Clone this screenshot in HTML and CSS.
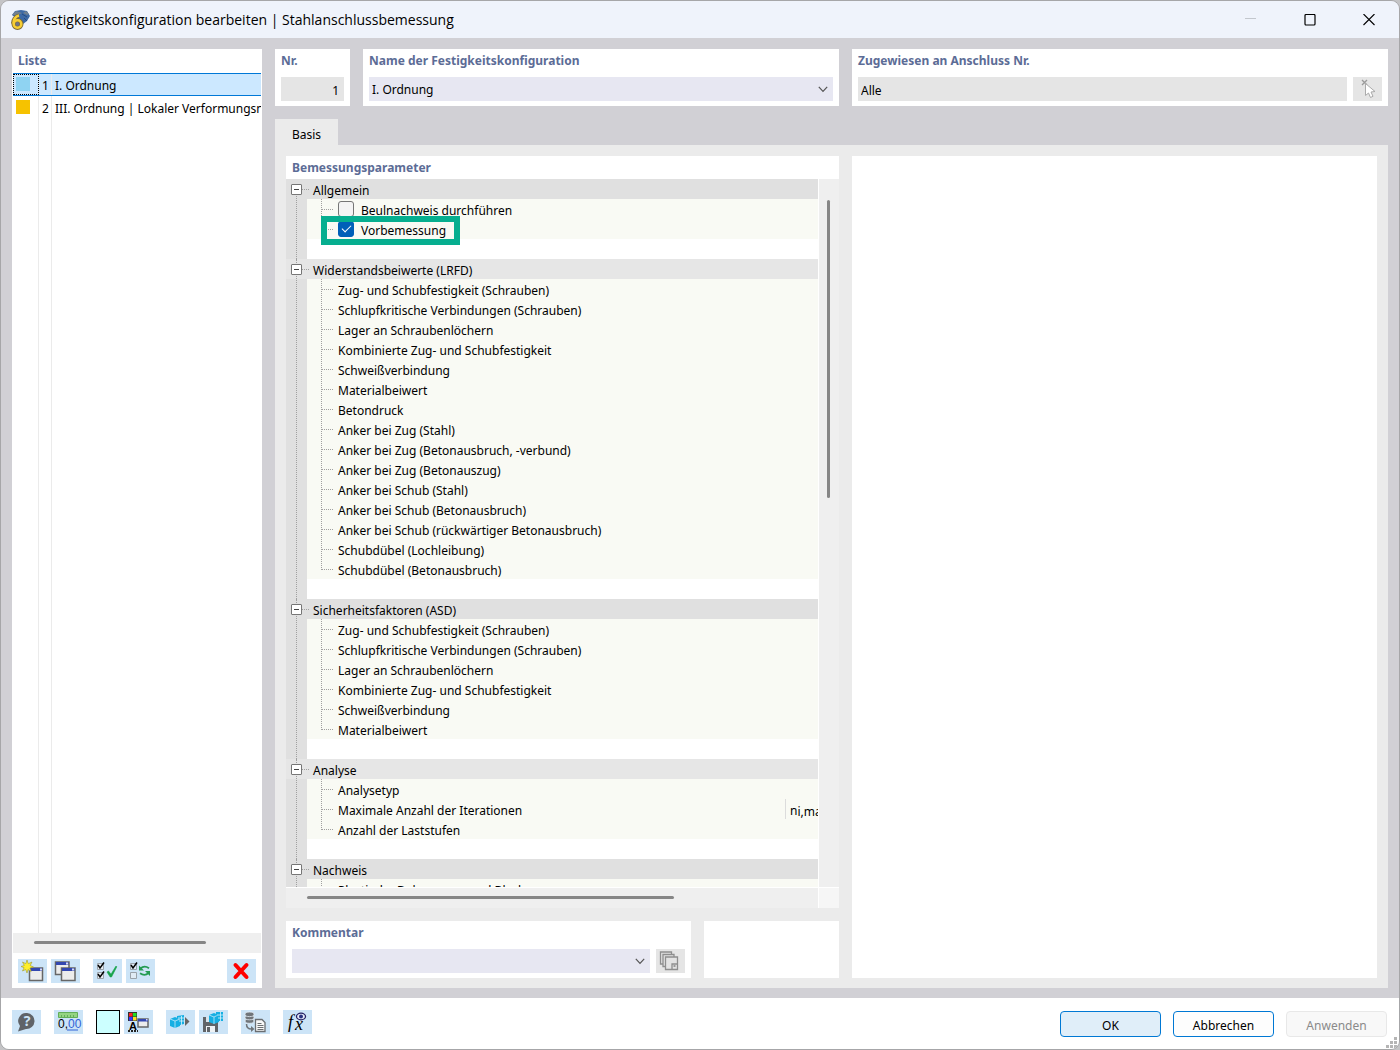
FILE: index.html
```html
<!DOCTYPE html>
<html lang="de">
<head>
<meta charset="utf-8">
<title>Festigkeitskonfiguration bearbeiten</title>
<link rel="stylesheet" href="styles.css">
</head>
<body>
<div class="window">
  <header class="titlebar">
    <svg class="logo" width="20" height="20" viewBox="0 0 20 20">
      <path d="M2 5 5 1 11 0 17 1 20 6 17 11 13 14 6 8Z" fill="#3d69a5"/>
      <path d="M2 5 6 1 12 3 8 5ZM13 3l4 2 2-1-3-3Z" fill="#71808f"/>
      <path d="M12 4l5 3M14 8l3 3" stroke="#254b83" fill="none"/>
      <path d="M9 5.500C5 6.500 3 10 3 13.500" fill="none" stroke="#7d6a35" stroke-width="4"/>
      <circle cx="7.500" cy="14" r="4" fill="#6e7488" stroke="#7d6a35" stroke-width="4"/>
      <path d="M9 5.500C5 6.500 3.500 10 3.500 13.500" fill="none" stroke="#f7cf35" stroke-width="2.600"/>
      <circle cx="7.500" cy="14" r="3.800" fill="none" stroke="#f7cf35" stroke-width="2.600"/>
    </svg>
    <h1 class="title">Festigkeitskonfiguration bearbeiten | Stahlanschlussbemessung</h1>
    <div class="caption-buttons">
      <button class="caption" aria-label="Minimieren" disabled><svg width="12" height="12"><path d="M0 4.500h11" stroke="#c3c7cd"/></svg></button>
      <button class="caption" aria-label="Maximieren"><svg width="12" height="12"><rect x="1" y=".5" width="10" height="10.500" rx="1" fill="none" stroke="#000" stroke-width="1.200"/></svg></button>
      <button class="caption" aria-label="Schließen"><svg width="12" height="12"><path d="M.5 0l11 11M11.500 0l-11 11" stroke="#000" stroke-width="1.100"/></svg></button>
    </div>
  </header>

  <main class="main">
    <aside class="list-panel">
      <h2 class="heading">Liste</h2>
      <div class="list-view">
        <table class="list">
          <tbody>
            <tr class="selected"><td class="c-color"><span class="swatch sky"></span></td><td class="c-no">1</td><td class="c-name">I. Ordnung</td></tr>
            <tr><td class="c-color"><span class="swatch amber"></span></td><td class="c-no">2</td><td class="c-name">III. Ordnung | Lokaler Verformungsnachweis</td></tr>
            <tr class="filler"><td></td><td></td><td></td></tr>
          </tbody>
        </table>
        <div class="hscroll"><span class="thumb list-thumb"></span></div>
      </div>
      <div class="toolbar list-tools">
        <button class="tool" aria-label="Neu"><svg width="29" height="24"><rect x="11.500" y="9" width="13" height="12.500" fill="#ececec" stroke="#666" stroke-width="1.500"/><path d="M12 9h12v3H12z" fill="#3347b0"/><path d="M22 9.500h2v2h-2z" fill="#d8dcf5"/><path d="M9 1l1.300 3.700L14 3l-1.800 3.500L15.500 8l-3.600 1 1.300 3.500L10 10.500 9 14l-1.300-3.500L4.500 12l1.600-3.300L3 7.500l3.300-1L4.500 3l3.300 1.700Z" fill="#ffef2a" stroke="#9f9a2d" stroke-width=".6"/></svg></button>
        <button class="tool" aria-label="Kopieren"><svg width="29" height="24"><rect x="4.500" y="3" width="13.500" height="12.500" fill="#ececec" stroke="#666" stroke-width="1.500"/><path d="M5 3h12.500v3H5z" fill="#3347b0"/><path d="M15 3.500h2v2h-2z" fill="#d8dcf5"/><rect x="10.500" y="9" width="13.500" height="12.500" fill="#ececec" stroke="#666" stroke-width="1.500"/><path d="M11 9h12.500v3H11z" fill="#3347b0"/><path d="M21 9.500h2v2h-2z" fill="#d8dcf5"/></svg></button>
        <button class="tool gap-before" aria-label="Alle auswählen"><svg width="29" height="24"><path d="M4.500 4.500h6v6h-6zM4.500 13.500h6v6h-6z" fill="#e8eef4" stroke="#9aa2aa"/><path d="M5 6l2 3 4-5.500M5 15l2 3 4-5.500" fill="none" stroke="#000" stroke-width="1.500"/><path d="M14 13l1.500-1 2.500 3.200L23 7l.8.8L18.500 18h-1.300Z" fill="#16a34a" stroke="#16a34a" stroke-width=".6"/></svg></button>
        <button class="tool" aria-label="Auswahl umkehren"><svg width="29" height="24"><path d="M4.500 4.500h6v6h-6zM4.500 13.500h6v6h-6z" fill="#e0ebf5" stroke="#9aa2aa"/><path d="M5 6l2 3 4-5.500" fill="none" stroke="#000" stroke-width="1.500"/><path d="M14.500 9.500c2.500-2.300 5.500-2.300 8.500-.3M22.500 14c-2.500 2.300-5.500 2.300-8.500.3" fill="none" stroke="#249b52" stroke-width="1.800"/><path d="M13 6.500v5h5ZM24 17v-5h-5Z" fill="#249b52"/></svg></button>
        <button class="tool push" aria-label="Löschen"><svg width="29" height="24"><path d="M8.500 6l11 12M19.500 6l-11 12" stroke="#f00" stroke-width="4" stroke-linecap="round"/></svg></button>
      </div>
    </aside>

    <section class="content">
      <div class="fields">
        <div class="field">
          <label class="heading" for="no">Nr.</label>
          <input class="input readonly number" id="no" value="1" readonly>
        </div>
        <div class="field">
          <label class="heading" for="name">Name der Festigkeitskonfiguration</label>
          <div class="combo">
            <select class="input" id="name"><option>I. Ordnung</option></select>
            <svg class="chevron" width="10" height="7"><path d="M.8.8 5 5.300 9.200.8" fill="none" stroke="#555" stroke-width="1.200"/></svg>
          </div>
        </div>
        <div class="field">
          <label class="heading" for="assigned">Zugewiesen an Anschluss Nr.</label>
          <div class="field-row">
            <input class="input readonly" id="assigned" value="Alle" readonly>
            <button class="tool disabled" aria-label="In Grafik auswählen" disabled><svg width="29" height="24"><path d="M9 3l5 5M14 3l-5 5" stroke="#9a9a9a" stroke-width="1.300"/><path d="M12.500 6.500v12l3-2.500 2 4.500 2.500-1.200-2-4.300 4-.5Z" fill="#fff" stroke="#aaa"/></svg></button>
          </div>
        </div>
      </div>

      <nav class="tabs"><button class="tab">Basis</button></nav>

      <div class="page">
        <div class="left">
          <section class="params">
            <h2 class="heading">Bemessungsparameter</h2>
            <div class="tree-frame">
              <div class="tree">
                <section class="group">
                  <h3 class="group-head"><button class="toggle" aria-label="Zuklappen"></button>Allgemein</h3>
                  <div class="group-body"><ul class="items">
                    <li class="item"><input class="check" type="checkbox" id="buckling"><label for="buckling">Beulnachweis durchführen</label></li>
                    <li class="item"><input class="check" type="checkbox" id="prelim" checked><label for="prelim">Vorbemessung</label><span class="marker"></span></li>
                  </ul></div>
                </section>
                <section class="group">
                  <h3 class="group-head"><button class="toggle" aria-label="Zuklappen"></button>Widerstandsbeiwerte (LRFD)</h3>
                  <div class="group-body"><ul class="items">
                    <li class="item">Zug- und Schubfestigkeit (Schrauben)</li>
                    <li class="item">Schlupfkritische Verbindungen (Schrauben)</li>
                    <li class="item">Lager an Schraubenlöchern</li>
                    <li class="item">Kombinierte Zug- und Schubfestigkeit</li>
                    <li class="item">Schweißverbindung</li>
                    <li class="item">Materialbeiwert</li>
                    <li class="item">Betondruck</li>
                    <li class="item">Anker bei Zug (Stahl)</li>
                    <li class="item">Anker bei Zug (Betonausbruch, -verbund)</li>
                    <li class="item">Anker bei Zug (Betonauszug)</li>
                    <li class="item">Anker bei Schub (Stahl)</li>
                    <li class="item">Anker bei Schub (Betonausbruch)</li>
                    <li class="item">Anker bei Schub (rückwärtiger Betonausbruch)</li>
                    <li class="item">Schubdübel (Lochleibung)</li>
                    <li class="item">Schubdübel (Betonausbruch)</li>
                  </ul></div>
                </section>
                <section class="group">
                  <h3 class="group-head"><button class="toggle" aria-label="Zuklappen"></button>Sicherheitsfaktoren (ASD)</h3>
                  <div class="group-body"><ul class="items">
                    <li class="item">Zug- und Schubfestigkeit (Schrauben)</li>
                    <li class="item">Schlupfkritische Verbindungen (Schrauben)</li>
                    <li class="item">Lager an Schraubenlöchern</li>
                    <li class="item">Kombinierte Zug- und Schubfestigkeit</li>
                    <li class="item">Schweißverbindung</li>
                    <li class="item">Materialbeiwert</li>
                  </ul></div>
                </section>
                <section class="group">
                  <h3 class="group-head"><button class="toggle" aria-label="Zuklappen"></button>Analyse</h3>
                  <div class="group-body"><ul class="items">
                    <li class="item">Analysetyp</li>
                    <li class="item">Maximale Anzahl der Iterationen<span class="symbol">n<small>i,ma</small></span></li>
                    <li class="item">Anzahl der Laststufen</li>
                  </ul></div>
                </section>
                <section class="group">
                  <h3 class="group-head"><button class="toggle" aria-label="Zuklappen"></button>Nachweis</h3>
                  <div class="group-body"><ul class="items">
                    <li class="item">Plastische Dehngrenze und Blech</li>
                  </ul></div>
                </section>
              </div>
              <div class="vscroll"><span class="vthumb"></span></div>
              <div class="hscroll"><span class="thumb tree-thumb"></span></div>
              <div class="corner"></div>
            </div>
          </section>
          <div class="comment-row">
            <div class="field comment">
              <label class="heading" for="comment">Kommentar</label>
              <div class="field-row">
                <div class="combo">
                  <select class="input" id="comment"><option></option></select>
                  <svg class="chevron" width="10" height="7"><path d="M.8.8 5 5.300 9.200.8" fill="none" stroke="#555" stroke-width="1.200"/></svg>
                </div>
                <button class="tool disabled" aria-label="Kommentare" disabled><svg width="29" height="24"><g fill="#e3e3e3" stroke="#8e8e8e" stroke-width="1.300"><path d="M4.500 3h11v12h-11z"/><path d="M7 5.500h11v12H7z"/><path d="M9.500 8h12v12.500h-12z"/></g><path d="M16 20v-5h5" fill="none" stroke="#8e8e8e" stroke-width="1.300"/><path d="M17.500 16h2v2h-2z" fill="#999"/></svg></button>
              </div>
            </div>
            <div class="blank"></div>
          </div>
        </div>
        <div class="preview"></div>
      </div>
    </section>
  </main>

  <footer class="footer">
    <div class="toolbar">
      <button class="tool" aria-label="Hilfe"><svg width="29" height="24"><path d="M15 3a8 8 0 1 1-1 16L6 21.500 8 16A8 8 0 0 1 15 3Z" fill="#5f6368"/><text x="15" y="16" text-anchor="middle" class="icon-help">?</text></svg></button>
      <button class="tool gap-before" aria-label="Einheiten"><svg width="29" height="24"><path d="M4.500 2.500h19v5h-19z" fill="#94d482" stroke="#62ae58"/><path d="M7.500 5v3M10.500 5v3M13.500 5v3M16.500 5v3M19.500 5v3" stroke="#62ae58"/><text x="4" y="18" class="icon-num">0,<tspan fill="#2f62d8">00</tspan></text><path d="M13 20h11" stroke="#2f62d8"/></svg></button>
      <button class="tool color gap-before" aria-label="Farbe"></button>
      <button class="tool tight" aria-label="Darstellung"><svg width="29" height="24"><path d="M4 2h9v9H4z" fill="#333"/><path d="M5 3h3.500v3.500H5z" fill="#f22"/><path d="M9 3h3.500v3.500H9z" fill="#2d2"/><path d="M5 7h3.500v3.500H5z" fill="#33f"/><path d="M9 7h3.500v3.500H9z" fill="#fd2"/><text x="9" y="20" text-anchor="middle" class="icon-a">A</text><path d="M4 21h10" stroke="#222" stroke-width="2" stroke-dasharray="2 1"/><rect x="14" y="9" width="10" height="8" fill="#ececec" stroke="#666" stroke-width="1.500"/><path d="M14 9h10v2.500H14z" fill="#3347b0"/><path d="M22 9h1.500v1.500H22z" fill="#d8dcf5"/></svg></button>
      <button class="tool gap-before" aria-label="Importieren"><svg width="29" height="24"><path d="M4 9l5-2 5 2v7l-5 2-5-2Z" fill="#16afe3"/><path d="M4 9l5 2 5-2M9 11v7" fill="none" stroke="#c6eafa" stroke-width=".8"/><path d="M11 6l7-1v9l-4 1V9l-3-1Z" fill="#16afe3"/><path d="M12 8h6M13 11h5M15.500 6v9" stroke="#d9f3fd" stroke-width=".8"/><path d="M19 7v9l4.500-4.500Z" fill="#666"/></svg></button>
      <button class="tool" aria-label="Speichern"><svg width="29" height="24"><path d="M4 7h13l2 3v12H4z" fill="#606468"/><path d="M7 16h9v6H7z" fill="#eef2f5"/><path d="M8 17h3v5H8z" fill="#606468"/><path d="M7 7h5v5H7z" fill="#d9e3eb"/><path d="M10 5l5-2 5 2v7l-5 2-5-2Z" fill="#16afe3"/><path d="M10 5l5 2 4-2M15 7v7" fill="none" stroke="#c6eafa" stroke-width=".8"/><path d="M17 2h7v9h-5V6l-2-1Z" fill="#16afe3"/><path d="M18 5h6M19 8h5M21.500 2v9" stroke="#d9f3fd" stroke-width=".8"/></svg></button>
      <button class="tool gap-before" aria-label="Datenbank"><svg width="29" height="24"><g fill="#70757a" stroke="#e4eef6" stroke-width=".8"><ellipse cx="8.500" cy="11" rx="4.500" ry="2.300"/><ellipse cx="8.500" cy="7.500" rx="4.500" ry="2.300"/><ellipse cx="8.500" cy="4.300" rx="4.500" ry="2.300"/></g><path d="M5.500 14c0 4 2 5 5 5" fill="none" stroke="#70757a" stroke-width="1.500"/><path d="M10 16v6l3.500-3Z" fill="#70757a"/><path d="M14.500 9.500H21l3 3v9h-9.500z" fill="#f8f8f8" stroke="#6a6e72" stroke-width="1.300"/><path d="M16.500 13.500h4M16.500 15.500h6M16.500 17.500h6M16.500 19.500h6" stroke="#6a6e72"/></svg></button>
      <button class="tool gap-before" aria-label="Formel"><svg width="29" height="24"><text x="5" y="18" class="icon-fx">f</text><text x="12" y="20" class="icon-fx">x</text><ellipse cx="18" cy="6.500" rx="4.500" ry="3.300" fill="#e6eaf8" stroke="#231f62" stroke-width="1.300"/><circle cx="18" cy="6.500" r="2" fill="#27307f"/></svg></button>
    </div>
    <div class="actions">
      <button class="btn primary">OK</button>
      <button class="btn">Abbrechen</button>
      <button class="btn" disabled>Anwenden</button>
    </div>
    <svg class="grip" width="11" height="11"><path d="M8 0h3v3H8zM4 4h3v3H4zM8 4h3v3H8zM0 8h3v3H0zM4 8h3v3H4zM8 8h3v3H8z" fill="#b5b5b5"/></svg>
  </footer>
</div>
</body>
</html>
```
FILE: styles.css
```css
* { box-sizing: border-box; }

body {
  margin: 0;
  background: #c4c4c6;
  font: 12px/20px "Noto Sans", "Open Sans", sans-serif;
  color: #000;
}

button, input, select { font: inherit; color: inherit; border: 0; margin: 0; padding: 0; border-radius: 0; }
h1, h2, h3, ul { margin: 0; padding: 0; font: inherit; list-style: none; }
svg { display: block; }

.window {
  display: flex;
  flex-direction: column;
  height: 100vh;
  border: 1px solid #a6a6a8;
  border-radius: 9px;
  background: #d1d0d5;
  overflow: hidden;
}

/* Title bar */
.titlebar { display: flex; align-items: center; flex: none; height: 37px; padding-left: 9px; background: #eff3fb; }
.title { flex: 1; padding-left: 6px; font: 14px/20px "Open Sans", "Noto Sans", sans-serif; }
.caption-buttons { display: flex; padding-right: 1px; }
.caption { display: grid; place-items: center; width: 59px; height: 36px; background: none; }

/* Shared parts */
.heading { display: block; height: 24px; padding: 1px 6px 0; line-height: 22px; font-weight: bold; color: #5c6c96; }
.tool { flex: none; width: 29px; height: 24px; background: #cce4f7; overflow: hidden; }
.tool.disabled { background: #e5e5e5; }
.toolbar { display: flex; gap: 4px; }
.toolbar .gap-before { margin-left: 9px; }
.hscroll { display: flex; align-items: center; height: 20px; padding-bottom: 2px; background: #efefef; }
.thumb { height: 3px; border-radius: 2px; background: #868686; }

.input { display: block; width: 100%; height: 24px; padding: 2px 3px 0; appearance: none; background: #e7e7f2; }
.input.readonly { background: #e5e5e5; }
.input.number { padding-right: 5px; text-align: right; }
.combo { position: relative; flex: 1; }
.chevron { position: absolute; right: 5px; top: 9px; pointer-events: none; }

/* Main area */
.main { display: flex; flex: 1; min-height: 0; gap: 13px; padding: 11px 11px 10px; }

.list-panel { display: flex; flex-direction: column; flex: none; width: 250px; background: #fff; }
.list-view { display: flex; flex-direction: column; flex: 1; min-height: 0; margin: 0 1px; }
.list { flex: 1; display: flex; flex-direction: column; overflow: hidden; }
.list tbody { display: flex; flex-direction: column; flex: 1; }
.list tr { display: flex; height: 23px; }
.list .filler { flex: 1; height: auto; }
.list td { padding: 0; line-height: 26px; border-right: 1px solid #ebebeb; white-space: nowrap; }
.list td:nth-child(1) { flex: none; width: 26px; padding: 4px 3px; }
.list td:nth-child(2) { flex: none; width: 13px; padding-left: 1px; text-align: center; }
.list td:nth-child(3) { flex: 1; padding-left: 3px; border: 0; overflow: hidden; }
.list .selected { background: #cce8ff; border: solid #0078d7; border-width: 1px 0; }
.list .selected td { line-height: 24px; }
.list .selected td:nth-child(1) { padding-top: 3px; outline: 1px dotted #000; outline-offset: -1px; }
.swatch { display: block; width: 14px; height: 14px; }
.sky { background: #8fd3f2; }
.amber { background: #f6c200; }
.list-thumb { width: 172px; margin-left: 21px; }
.list-tools { padding: 6px 6px 5px; }
.push { margin-left: auto; }

.content { display: flex; flex-direction: column; flex: 1; min-width: 0; }
.fields { display: grid; grid-template-columns: 75px 476px minmax(0, 1fr); gap: 13px; }
.field { padding: 0 6px 5px; background: #fff; }
.field .heading { height: 28px; padding-left: 0; }
.field-row { display: flex; gap: 6px; }

.tabs { display: flex; padding-top: 13px; }
.tab { width: 63px; height: 26px; padding-top: 5px; background: #ebebeb; }

.page { display: flex; flex: 1; min-height: 0; gap: 13px; padding: 11px 11px 10px; background: #ebebeb; }
.left { display: flex; flex-direction: column; flex: none; width: 553px; gap: 13px; }
.preview { flex: 1; background: #fff; }

/* Parameter tree */
.params { display: flex; flex-direction: column; flex: 1; min-height: 0; background: #fff; }
.params > .heading { height: 23px; }
.tree-frame { display: grid; flex: 1; min-height: 0; grid-template: minmax(0, 1fr) 20px / minmax(0, 1fr) 20px; gap: 1px; }
.tree { overflow: hidden; }
.vscroll { display: flex; justify-content: center; padding: 21px 2px 0 0; background: #efefef; }
.vthumb { width: 3px; height: 298px; border-radius: 2px; background: #868686; }
.corner { background: #f6f6f6; }
.tree-thumb { width: 367px; margin-left: 21px; }

.group { position: relative; background: #e0e0e0; }
.group:nth-child(even) .group-head { background: #e6e6e6; }
.group::before { content: ""; position: absolute; z-index: 1; left: 10px; top: 0; bottom: 0; border-left: 1px dotted #a0a0a0; }
.group:first-child::before { top: 10px; }
.group-head { display: flex; align-items: flex-start; height: 20px; padding-left: 5px; line-height: 24px; }
.toggle { position: relative; z-index: 2; width: 11px; height: 11px; margin: 5px 11px 0 0; border: 1px solid #767676; border-radius: 1px; background: #fff; }
.toggle::before { content: ""; position: absolute; left: 2px; top: 4px; width: 5px; height: 1px; background: #444; }
.toggle::after { content: ""; position: absolute; left: 10px; top: 4px; width: 7px; border-top: 1px dotted #a0a0a0; }
.group-body { margin-left: 21px; padding-bottom: 20px; background: #fff; }
.items { position: relative; background: #f9faf4; }
.items::before { content: ""; position: absolute; left: 14px; top: 0; bottom: 9px; border-left: 1px dotted #a0a0a0; }
.item { position: relative; display: flex; align-items: flex-start; height: 20px; padding-left: 31px; line-height: 24px; white-space: nowrap; }
.item::before { content: ""; position: absolute; left: 14px; top: 10px; width: 12px; border-top: 1px dotted #a0a0a0; }
.item label { padding-left: 7px; }

.check { flex: none; position: relative; width: 16px; height: 16px; margin-top: 2px; appearance: none; border: 1px solid #767676; border-radius: 3px; background: #f4f4f4; }
.check:checked { border-color: #005fb8; background: #005fb8; }
.check:checked::after { content: ""; position: absolute; left: 3px; top: 3px; width: 8px; height: 4px; border: solid #fff; border-width: 0 0 1px 1px; transform: rotate(-45deg); }
.marker { position: absolute; z-index: 3; left: 14px; top: -3px; width: 139px; height: 29px; border: 6px solid #06ae8f; pointer-events: none; }
.symbol { display: flex; height: 20px; width: 33px; margin-left: auto; padding-left: 4px; border-left: 1px solid #dcdcdc; overflow: hidden; }
.symbol small { padding-top: 1px; font-size: 12px; }

.comment-row { display: grid; grid-template-columns: minmax(0, 1fr) 135px; gap: 13px; }
.blank { background: #fff; }

/* Footer */
.footer { position: relative; display: flex; justify-content: space-between; align-items: flex-start; flex: none; height: 51px; padding: 12px 12px 0 11px; background: #fff; }
.tool.color { width: 24px; border: 1px solid #000; background: #ccffff; }
.toolbar .tight { margin-left: 0; }
.actions { display: flex; gap: 12px; padding-top: 1px; }
.btn { width: 101px; height: 26px; padding-top: 4px; border: 1px solid #0078d4; border-radius: 4px; background: #fdfdfd; }
.btn.primary { background: #e0eef9; }
.btn:disabled { border-color: #e8e8e8; background: #f8f8f8; color: #8a8a8a; }
.grip { position: absolute; right: 2px; bottom: 1px; }

/* Lettering inside icons */
.icon-help { font: bold 14px "Noto Sans", sans-serif; fill: #cce4f7; }
.icon-num { font: 12px "Liberation Sans", sans-serif; }
.icon-a { font: bold 11px "Liberation Sans", sans-serif; }
.icon-fx { font: italic 18px "Liberation Serif", serif; }
```
